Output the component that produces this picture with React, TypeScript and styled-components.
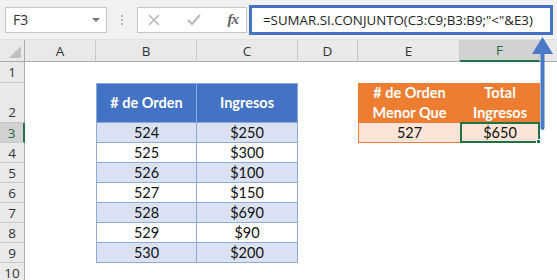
import React from "react";
import styled, { createGlobalStyle, css } from "styled-components";

const GlobalStyle = createGlobalStyle`
  html, body {
    margin: 0;
    padding: 0;
    background: #ffffff;
  }
  body {
    width: 557px;
    height: 280px;
    overflow: hidden;
    font-family: "Open Sans", "Noto Sans", sans-serif;
  }
`;

const uiFont = `"Open Sans", "Noto Sans", sans-serif`;
const cellFont = `Lato, "Liberation Sans", sans-serif`;

const Window = styled.div`
  width: 557px;
  height: 280px;
  overflow: hidden;
  position: relative;
`;

/* ---------- formula bar ---------- */

const FormulaBar = styled.div`
  height: 40px;
  box-sizing: border-box;
  background: #f1f1f1;
  display: flex;
  align-items: center;
  padding: 0 4px 0 5px;
  border-bottom: 1px solid #e2e2e2;
`;

const NameBox = styled.div`
  width: 102px;
  height: 26px;
  box-sizing: border-box;
  background: #fff;
  border: 1px solid #c6c6c6;
  display: flex;
  align-items: center;
  justify-content: space-between;
  padding: 0 6px 0 7px;
  font-family: ${uiFont};
  font-size: 14px;
  color: #333;
`;

const DropCaret = styled.span`
  width: 0;
  height: 0;
  border-left: 4px solid transparent;
  border-right: 4px solid transparent;
  border-top: 4px solid #777;
`;

const Grip = styled.div`
  width: 30px;
  display: flex;
  flex-direction: column;
  align-items: center;
  gap: 2px;
  span {
    width: 2px;
    height: 2px;
    background: #b4b4b4;
  }
`;

const FnBox = styled.div`
  width: 110px;
  height: 26px;
  box-sizing: border-box;
  background: #fff;
  border: 1px solid #c6c6c6;
  display: flex;
  align-items: center;
  justify-content: space-between;
  padding: 0 8px 0 10px;
`;

const Fx = styled.span`
  font-family: "Liberation Serif", serif;
  font-style: italic;
  font-weight: bold;
  font-size: 15px;
  color: #666;
  letter-spacing: -1px;
`;

const FormulaInput = styled.div`
  flex: 1;
  height: 30px;
  margin-left: 2px;
  box-sizing: border-box;
  background: #fff;
  border: 3px solid #4472c4;
  display: flex;
  align-items: center;
  padding-left: 11px;
  font-family: ${uiFont};
  font-size: 13.3px;
  color: #222;
  white-space: nowrap;
`;

/* ---------- sheet ---------- */

const Sheet = styled.div`
  display: grid;
  grid-template-columns: 25px 71px 101px 101px 60px 102px 80px 100px;
  grid-template-rows: 22px 21px 40px repeat(8, 20px);
`;

const ColHead = styled.div<{ $active?: boolean }>`
  background: ${(p) => (p.$active ? "#d2d2d2" : "#e9e9e9")};
  border-right: 1px solid #c8c8c8;
  border-bottom: ${(p) => (p.$active ? "2px solid #217346" : "1px solid #ababab")};
  box-sizing: border-box;
  display: flex;
  align-items: center;
  justify-content: center;
  font-family: ${uiFont};
  font-size: 13.5px;
  color: ${(p) => (p.$active ? "#1e6b40" : "#333")};
`;

const Corner = styled.div`
  background: #e9e9e9;
  border-right: 1px solid #ababab;
  border-bottom: 1px solid #ababab;
  box-sizing: border-box;
  position: relative;
  &::after {
    content: "";
    position: absolute;
    right: 3px;
    bottom: 3px;
    border-left: 12px solid transparent;
    border-bottom: 12px solid #c0c0c0;
  }
`;

const RowHead = styled.div<{ $active?: boolean; $tall?: boolean }>`
  background: ${(p) => (p.$active ? "#d2d2d2" : "#e9e9e9")};
  border-right: ${(p) => (p.$active ? "2px solid #217346" : "1px solid #ababab")};
  border-bottom: 1px solid #c8c8c8;
  box-sizing: border-box;
  display: flex;
  align-items: ${(p) => (p.$tall ? "flex-end" : "center")};
  justify-content: center;
  padding-bottom: ${(p) => (p.$tall ? "1px" : "0")};
  font-family: ${uiFont};
  font-size: 13.5px;
  color: ${(p) => (p.$active ? "#1e6b40" : "#333")};
`;

type Tone = "blueHead" | "blueBand" | "plain" | "orangeHead" | "orangeBody" | "empty";

const tones: Record<Tone, ReturnType<typeof css>> = {
  blueHead: css`
    background: #4472c4;
    color: #fff;
    font-weight: 700;
    border-right: 1px solid #8eaadb;
    border-bottom: 1px solid #8eaadb;
  `,
  blueBand: css`
    background: #d9e1f2;
    border-right: 1px solid #8eaadb;
    border-bottom: 1px solid #8eaadb;
  `,
  plain: css`
    background: #fff;
    border-right: 1px solid #8eaadb;
    border-bottom: 1px solid #8eaadb;
  `,
  orangeHead: css`
    background: #ed7d31;
    color: #fff;
    font-weight: 700;
  `,
  orangeBody: css`
    background: #fce4d6;
    border-bottom: 1px solid #ed7d31;
  `,
  empty: css`
    background: #fff;
  `,
};

const Cell = styled.div<{ $tone: Tone; $first?: boolean; $top?: boolean }>`
  box-sizing: border-box;
  display: flex;
  flex-direction: column;
  align-items: center;
  justify-content: center;
  font-family: ${cellFont};
  font-size: 14.5px;
  line-height: 20px;
  color: #111;
  position: relative;
  ${(p) => tones[p.$tone]}
  ${(p) =>
    p.$first &&
    css`
      border-left: 1px solid ${p.$tone === "orangeBody" || p.$tone === "orangeHead" ? "#ed7d31" : "#8eaadb"};
    `}
  ${(p) =>
    p.$top &&
    css`
      border-top: 1px solid #8eaadb;
    `}
`;

const Selection = styled.div`
  position: absolute;
  left: 0;
  top: -1px;
  right: 0;
  bottom: -1px;
  border: 2px solid #217346;
  pointer-events: none;
  &::after {
    content: "";
    position: absolute;
    right: -5px;
    bottom: -5px;
    width: 5px;
    height: 5px;
    background: #217346;
    border: 1px solid #fff;
  }
`;

const Arrow = styled.svg`
  position: absolute;
  left: 530px;
  top: 36px;
`;

// the last column runs past the window edge, so its letter never shows
const columns = ["A", "B", "C", "D", "E", "F", ""];

const orders: [number, string][] = [
  [524, "$250"],
  [525, "$300"],
  [526, "$100"],
  [527, "$150"],
  [528, "$690"],
  [529, "$90"],
  [530, "$200"],
];

const Blank = () => <Cell $tone="empty" />;

export default function App() {
  return (
    <Window>
      <GlobalStyle />
      <FormulaBar>
        <NameBox>
          F3
          <DropCaret />
        </NameBox>
        <Grip>
          <span />
          <span />
          <span />
        </Grip>
        <FnBox>
          <svg width="12" height="12" viewBox="0 0 12 12">
            <path d="M1 1 L11 11 M11 1 L1 11" stroke="#b8b8b8" strokeWidth="1.6" />
          </svg>
          <svg width="14" height="12" viewBox="0 0 14 12">
            <path d="M1 6 L5 10 L13 1" stroke="#b8b8b8" strokeWidth="2" fill="none" />
          </svg>
          <Fx>fx</Fx>
        </FnBox>
        <FormulaInput>=SUMAR.SI.CONJUNTO(C3:C9;B3:B9;"&lt;"&amp;E3)</FormulaInput>
      </FormulaBar>

      <Sheet>
        <Corner />
        {columns.map((c, i) => (
          <ColHead key={i} $active={c === "F"}>
            {c}
          </ColHead>
        ))}

        <RowHead>1</RowHead>
        {columns.map((_, i) => (
          <Blank key={i} />
        ))}

        <RowHead $tall>2</RowHead>
        <Blank />
        <Cell $tone="blueHead" $first $top>
          # de Orden
        </Cell>
        <Cell $tone="blueHead" $top>
          Ingresos
        </Cell>
        <Blank />
        <Cell $tone="orangeHead" $first>
          <span># de Orden</span>
          <span>Menor Que</span>
        </Cell>
        <Cell $tone="orangeHead">
          <span>Total</span>
          <span>Ingresos</span>
        </Cell>
        <Blank />

        {orders.map(([id, amount], i) => {
          const row = i + 3;
          const tone: Tone = i % 2 === 0 ? "blueBand" : "plain";
          return (
            <React.Fragment key={id}>
              <RowHead $active={row === 3}>{row}</RowHead>
              <Blank />
              <Cell $tone={tone} $first>
                {id}
              </Cell>
              <Cell $tone={tone}>{amount}</Cell>
              <Blank />
              {row === 3 ? (
                <>
                  <Cell $tone="orangeBody" $first>
                    527
                  </Cell>
                  <Cell $tone="orangeBody">
                    $650
                    <Selection />
                  </Cell>
                </>
              ) : (
                <>
                  <Blank />
                  <Blank />
                </>
              )}
              <Blank />
            </React.Fragment>
          );
        })}

        <RowHead>10</RowHead>
        {columns.map((_, i) => (
          <Blank key={i} />
        ))}
      </Sheet>

      <Arrow width="26" height="96" viewBox="0 0 26 96">
        <path d="M12.5 16 V92" stroke="#4a79c7" strokeWidth="4" strokeLinecap="round" />
        <path d="M2 18 L12.5 1 L23 18 Z" fill="#4a79c7" />
      </Arrow>
    </Window>
  );
}
